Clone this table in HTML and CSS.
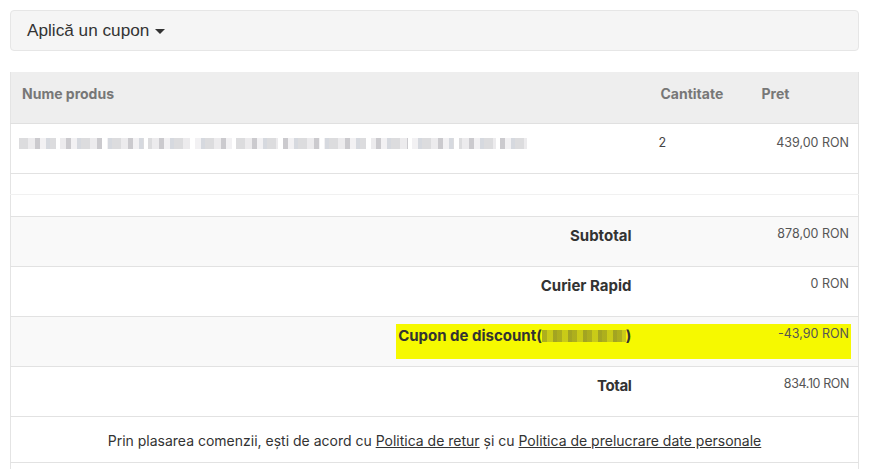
FILE: index.html
```html
<!DOCTYPE html>
<html lang="ro">
<head>
    <meta charset="UTF-8">
    <meta name="viewport" content="width=device-width, initial-scale=1.0">
    <title>Cos de cumparaturi</title>
    <link rel="stylesheet" href="styles.css">
</head>
<body>
    <div class="coupon-bar">
        <span class="coupon-toggle">Aplică un cupon <span class="caret"></span></span>
    </div>

    <table class="cart">
        <thead>
            <tr>
                <th class="col-name">Nume produs</th>
                <th class="col-qty">Cantitate</th>
                <th class="col-price">Pret</th>
            </tr>
        </thead>
        <tbody>
            <tr class="product">
                <td><span class="blurred"></span></td>
                <td class="qty">2</td>
                <td class="price">439,00 RON</td>
            </tr>
            <tr class="spacer"><td colspan="3"></td></tr>
            <tr class="spacer second"><td colspan="3"></td></tr>

            <tr class="summary shaded">
                <td class="label">Subtotal</td>
                <td></td>
                <td class="price">878,00 RON</td>
            </tr>
            <tr class="summary">
                <td class="label">Curier Rapid</td>
                <td></td>
                <td class="price">0 RON</td>
            </tr>
            <tr class="summary shaded">
                <td class="label highlight-cell">
                    <span class="highlight"></span>
                    <span class="label-text">Cupon de discount(<span class="blurred-code"></span>)</span>
                </td>
                <td></td>
                <td class="price"><span class="label-text">-43,90 RON</span></td>
            </tr>
            <tr class="summary">
                <td class="label narrow">Total</td>
                <td></td>
                <td class="price narrow">834.10 RON</td>
            </tr>
            <tr class="terms">
                <td colspan="3">
                    Prin plasarea comenzii, ești de acord cu <a href="#">Politica de retur</a> și cu <a href="#">Politica de prelucrare date personale</a>
                </td>
            </tr>
            <tr class="tail"><td colspan="3"></td></tr>
        </tbody>
    </table>
</body>
</html>
```

FILE: styles.css
```css
body {
    margin: 0;
    padding: 10px 13px 10px 10px;
    font-family: Inter, "Noto Sans", sans-serif;
    color: #333;
    background: #fff;
}

/* Coupon toggle */
.coupon-bar {
    height: 39px;
    background: #f5f5f5;
    border: 1px solid #e6e6e6;
    border-radius: 4px;
    padding: 0 16px;
    display: flex;
    align-items: center;
}

.coupon-toggle {
    font-family: "Liberation Sans", Arial, sans-serif;
    font-size: 17.2px;
    color: #333;
}

.caret {
    display: inline-block;
    width: 0;
    height: 0;
    margin-left: 1px;
    vertical-align: middle;
    border-top: 5px solid #333;
    border-left: 5px solid transparent;
    border-right: 5px solid transparent;
}

/* Cart table */
.cart {
    width: 100%;
    margin-top: 21px;
    border-collapse: collapse;
    table-layout: fixed;
    border-left: 1px solid #e4e4e4;
    border-right: 1px solid #e4e4e4;
}

.col-name { width: 639px; }
.col-qty { width: 101px; }

.cart th {
    height: 51px;
    background: #eee;
    color: #777;
    font-size: 14px;
    font-weight: 700;
    text-align: left;
    vertical-align: top;
    padding: 13px 11px 0;
    border-bottom: 1px solid #e0e0e0;
    box-sizing: border-box;
}

.cart td {
    vertical-align: top;
    padding: 0 9px 0 10px;
    font-size: 12.5px;
    color: #555;
    border-bottom: 1px solid #e2e2e2;
    box-sizing: border-box;
}

.product td {
    height: 50px;
    padding-top: 11px;
    line-height: 16px;
}

.product .qty {
    padding-left: 9px;
    color: #444;
}

.blurred {
    display: block;
    width: 508px;
    height: 11px;
    margin-top: 3px;
    margin-left: -2px;
    background:
        repeating-linear-gradient(90deg, transparent 0 37px, #fff 37px 41px, transparent 41px 83px, #fff 83px 88px),
        repeating-linear-gradient(90deg, #d7d7d9 0 9px, #e9e8ea 9px 16px, #c2c1c6 16px 21px, #f0eff1 21px 27px, #cfd3da 27px 31px);
    opacity: 0.85;
}

.price {
    text-align: right;
}

.spacer td {
    height: 21px;
    border-bottom-color: #f1f1f1;
}

.spacer.second td {
    height: 22px;
    border-bottom-color: #e2e2e2;
}

.summary td {
    height: 50px;
    padding-top: 9px;
    line-height: 16px;
}

.summary.shaded td {
    background: #f9f9f9;
}

.summary .label {
    text-align: right;
    padding-right: 18px;
    font-size: 15px;
    font-weight: 700;
    color: #333;
    line-height: 20px;
}

.highlight-cell {
    position: relative;
}

/* marker highlight drawn over the coupon row */
.highlight {
    position: absolute;
    left: 385px;
    top: 7px;
    width: 455px;
    height: 35px;
    background: #f6f900;
}

.label-text {
    position: relative;
    z-index: 1;
}

.price .label-text {
    color: #555;
}

.blurred-code {
    display: inline-block;
    width: 84px;
    height: 12px;
    vertical-align: -1px;
    background: repeating-linear-gradient(90deg, #8e8f2a 0 5px, #b6b722 5px 11px, #7f8030 11px 15px);
    opacity: 0.7;
}

.narrow {
    letter-spacing: -0.4px;
}

.terms td {
    height: 46px;
    text-align: center;
    vertical-align: middle;
    font-size: 14px;
    color: #333;
    padding: 2px 10px 0;
}

.terms a {
    color: #333;
    text-decoration: underline;
}

.tail td {
    height: 10px;
    border-bottom: none;
}
```
